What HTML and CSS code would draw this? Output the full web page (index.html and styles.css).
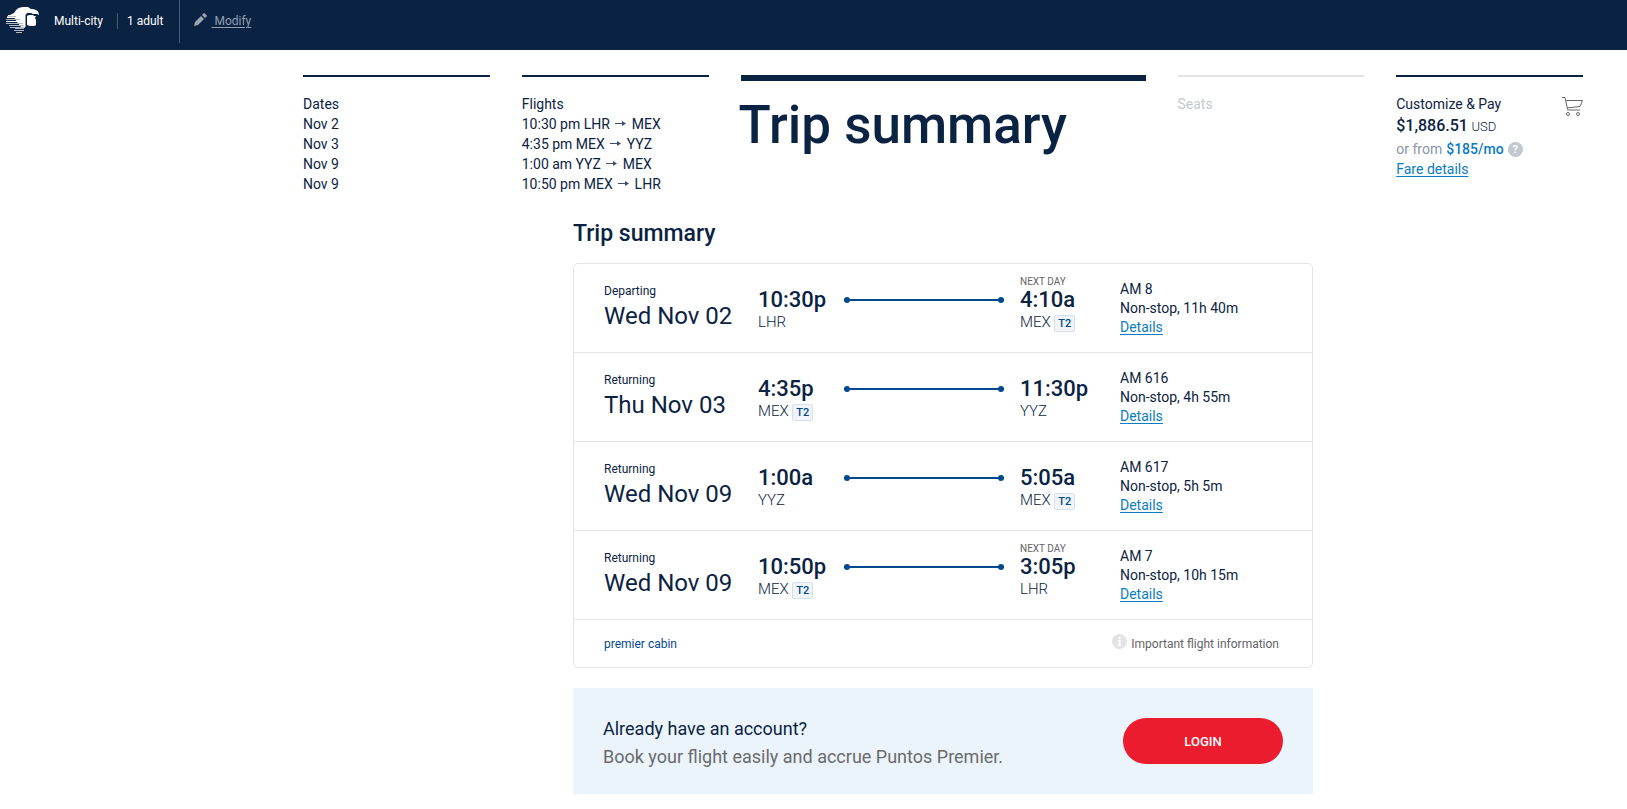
FILE: index.html
```
<!DOCTYPE html>
<html lang="en">
<head>
    <meta charset="UTF-8">
    <meta name="viewport" content="width=device-width, initial-scale=1.0">
    <title>Trip summary</title>
    <link rel="stylesheet" href="styles.css">
</head>
<body>
    <header class="topbar">
        <a class="logo" href="#" aria-label="Home">
            <svg width="34" height="28" viewBox="0 0 34 28">
                <path fill="#fff" d="M4 9 L8 7 C10 3 13 1 17 1 H22 L25 3 C30 3 33 5 33 9 L31 8 H27 L25 7 H21 L19.500 9 V21 H15 L11 16 L8 11 Z"/>
                <path fill="#fff" d="M21 10 L23 9 H27 L28 10 H30 L29 12 L30 14 V18 Q30 20 28 20 H24 L21 19 Z"/>
                <path fill="#fff" d="M2 9h10v1H2zM1 11h12v1H1zM0 15h15v1H0z"/>
                <path fill="#aeb8c8" d="M1 10h9v1H1zM0 13h14v1H0zM0 17h17v1H0zM3 19h15v1H3zM4 21h15v1H4zM9 22h9v1H9zM8 24h10v1H8zM10 26h6v1h-6z"/>
            </svg>
        </a>
        <span class="trip-type">Multi-city</span>
        <span class="passengers">1 adult</span>
        <a class="modify" href="#">
            <svg width="13" height="13" viewBox="0 0 13 13">
                <path fill="#9aa4b3" d="M0 13 L1 9 L7 3 L10 6 L4 12 Z M8 2 L10 0 Q11 0 13 3 L11 5 Z"/>
            </svg><span>&nbsp;Modify</span>
        </a>
    </header>

    <main class="container">
        <nav class="steps">
            <div class="step">
                <div>Dates</div>
                <div>Nov 2</div>
                <div>Nov 3</div>
                <div>Nov 9</div>
                <div>Nov 9</div>
            </div>
            <div class="step">
                <div>Flights</div>
                <div>10:30 pm LHR <svg class="arrow" viewBox="0 0 11 7"><path d="M0 3h7v1H0zM7 1l4 2.500L7 6z"/></svg> MEX</div>
                <div>4:35 pm MEX <svg class="arrow" viewBox="0 0 11 7"><path d="M0 3h7v1H0zM7 1l4 2.500L7 6z"/></svg> YYZ</div>
                <div>1:00 am YYZ <svg class="arrow" viewBox="0 0 11 7"><path d="M0 3h7v1H0zM7 1l4 2.500L7 6z"/></svg> MEX</div>
                <div>10:50 pm MEX <svg class="arrow" viewBox="0 0 11 7"><path d="M0 3h7v1H0zM7 1l4 2.500L7 6z"/></svg> LHR</div>
            </div>
            <div class="step current">
                <h1>Trip summary</h1>
            </div>
            <div class="step disabled">
                <div>Seats</div>
            </div>
            <div class="step pay">
                <div>
                    <div>Customize &amp; Pay</div>
                    <div class="price"><strong>$1,886.51</strong> <small>USD</small></div>
                    <div class="monthly">or from <strong>$185/mo</strong> <button class="help" aria-label="Help">?</button></div>
                    <a href="#">Fare details</a>
                </div>
                <svg class="cart" width="21" height="19" viewBox="0 0 21 19">
                    <path fill="none" stroke="#66676a" d="M0 .5H3L5.500 12M3.500 3.500H20.500L18 9.500L5 11"/>
                    <path fill="none" stroke="#b5b5b5" stroke-width="2" d="M5 13H18"/>
                    <circle cx="6" cy="17" r="1.500" fill="none" stroke="#66676a"/>
                    <circle cx="16" cy="17" r="1.500" fill="none" stroke="#66676a"/>
                </svg>
            </div>
        </nav>

        <section class="summary">
            <h2>Trip summary</h2>

            <div class="card">
                <div class="flight">
                    <div class="day">
                        <div class="label">Departing</div>
                        <div class="date">Wed Nov 02</div>
                    </div>
                    <div class="stop">
                        <div class="time">10:30p</div>
                        <div class="airport">LHR</div>
                    </div>
                    <div class="route"></div>
                    <div class="stop">
                        <div class="next-day">NEXT DAY</div>
                        <div class="time">4:10a</div>
                        <div class="airport">MEX <span class="terminal">T2</span></div>
                    </div>
                    <div class="info">
                        <div>AM 8</div>
                        <div>Non-stop, 11h 40m</div>
                        <a href="#">Details</a>
                    </div>
                </div>

                <div class="flight">
                    <div class="day">
                        <div class="label">Returning</div>
                        <div class="date">Thu Nov 03</div>
                    </div>
                    <div class="stop">
                        <div class="time">4:35p</div>
                        <div class="airport">MEX <span class="terminal">T2</span></div>
                    </div>
                    <div class="route"></div>
                    <div class="stop">
                        <div class="time">11:30p</div>
                        <div class="airport">YYZ</div>
                    </div>
                    <div class="info">
                        <div>AM 616</div>
                        <div>Non-stop, 4h 55m</div>
                        <a href="#">Details</a>
                    </div>
                </div>

                <div class="flight">
                    <div class="day">
                        <div class="label">Returning</div>
                        <div class="date">Wed Nov 09</div>
                    </div>
                    <div class="stop">
                        <div class="time">1:00a</div>
                        <div class="airport">YYZ</div>
                    </div>
                    <div class="route"></div>
                    <div class="stop">
                        <div class="time">5:05a</div>
                        <div class="airport">MEX <span class="terminal">T2</span></div>
                    </div>
                    <div class="info">
                        <div>AM 617</div>
                        <div>Non-stop, 5h 5m</div>
                        <a href="#">Details</a>
                    </div>
                </div>

                <div class="flight">
                    <div class="day">
                        <div class="label">Returning</div>
                        <div class="date">Wed Nov 09</div>
                    </div>
                    <div class="stop">
                        <div class="time">10:50p</div>
                        <div class="airport">MEX <span class="terminal">T2</span></div>
                    </div>
                    <div class="route"></div>
                    <div class="stop">
                        <div class="next-day">NEXT DAY</div>
                        <div class="time">3:05p</div>
                        <div class="airport">LHR</div>
                    </div>
                    <div class="info">
                        <div>AM 7</div>
                        <div>Non-stop, 10h 15m</div>
                        <a href="#">Details</a>
                    </div>
                </div>

                <div class="card-footer">
                    <span class="cabin">premier cabin</span>
                    <span class="important">
                        <svg width="15" height="15" viewBox="0 0 15 15">
                            <circle cx="7.500" cy="7.500" r="7.500" fill="#e3e3e3"/>
                            <path fill="#fff" d="M6.500 3h2v2h-2zM6 6h2.500v5H9v1H6v-1h.5V7H6z"/>
                        </svg>
                        Important flight information
                    </span>
                </div>
            </div>

            <div class="account">
                <div class="account-text">
                    <div>Already have an account?</div>
                    <div class="benefit">Book your flight easily and accrue Puntos Premier.</div>
                </div>
                <button class="login">LOGIN</button>
            </div>
        </section>
    </main>
</body>
</html>
```

FILE: styles.css
```
* {
    box-sizing: border-box;
}
body {
    margin: 0;
    font-family: Roboto, "Liberation Sans", sans-serif;
    font-size: 14px;
    line-height: 20px;
    color: #0b2343;
    background: #fff;
}
h1, h2 {
    margin: 0;
    font-weight: 500;
}
a {
    color: #0a7cc1;
    text-underline-offset: 2px;
}
strong {
    font-weight: 500;
}

/* top bar */
.topbar {
    display: flex;
    align-items: flex-start;
    height: 50px;
    padding-left: 6px;
    background: #0b2343;
    color: #fff;
    font-size: 12px;
}
.logo {
    margin: 6px 14px 0 0;
}
.logo svg {
    display: block;
}
.trip-type, .passengers {
    margin-top: 13px;
    line-height: 16px;
}
.trip-type {
    padding-right: 14px;
    border-right: 1px solid #4a5b74;
}
.passengers {
    padding: 0 16px 0 9px;
}
.modify {
    display: flex;
    height: 43px;
    padding: 13px 0 0 14px;
    border-left: 1px solid #4a5b74;
    color: #929daf;
    line-height: 16px;
}
.modify span {
    margin-left: 4px;
}

.container {
    padding: 25px 44px 0 303px;
}

/* booking steps */
.steps {
    display: grid;
    grid-template-columns: 1fr 1fr 405px 1fr 1fr;
    gap: 32px;
}
.step {
    padding-top: 17px;
    border-top: 2px solid #0b2343;
}
.step.current {
    border-top-width: 6px;
}
.step.current h1 {
    margin-left: -2px;
    font-size: 53px;
    line-height: 54px;
}
.step.disabled {
    border-color: #e3e4e5;
    color: #c4c9d1;
}
.arrow {
    width: 11px;
    height: 7px;
    margin: 0 2px 2px;
    fill: #3d4f69;
}
.pay {
    display: flex;
    align-items: flex-start;
    justify-content: space-between;
}
.cart {
    margin-top: 3px;
}
.price {
    line-height: 24px;
}
.price strong {
    font-size: 16px;
}
.price small {
    font-size: 13px;
    font-weight: 300;
}
.monthly {
    display: flex;
    align-items: center;
    gap: 4px;
    color: #8b96a6;
}
.monthly strong {
    color: #0a7cc1;
}
.help {
    width: 15px;
    height: 15px;
    padding: 0;
    border: none;
    border-radius: 50%;
    background: #c2c8d0;
    color: #fff;
    font: 700 11px/15px Roboto, sans-serif;
}

/* trip summary */
.summary {
    max-width: 740px;
    margin: 25px auto 0;
}
.summary h2 {
    font-size: 23px;
    line-height: 30px;
}
.card {
    margin-top: 14px;
    border: 1px solid #e3e4e5;
    border-radius: 5px;
}
.flight {
    display: grid;
    grid-template-columns: 154px 86px 176px 100px 1fr;
    align-items: end;
    height: 89px;
    padding: 0 0 15px 30px;
    border-bottom: 1px solid #e3e4e5;
}
.label {
    font-size: 12px;
    line-height: 16px;
}
.date {
    padding-bottom: 3px;
    font-size: 24px;
    line-height: 35px;
}
.stop {
    padding-bottom: 5px;
}
.time {
    font-size: 22px;
    font-weight: 500;
    line-height: 24px;
}
.next-day {
    font-size: 10px;
    line-height: 12px;
    color: #636466;
}
.airport {
    font-size: 15px;
    font-weight: 300;
}
.terminal {
    display: inline-block;
    padding: 0 3px;
    border: 1px solid #d5e0ec;
    border-radius: 2px;
    background: #f1f5f9;
    color: #00498f;
    font-size: 11px;
    font-weight: 500;
    line-height: 15px;
}

/* line between the two airports, with a dot at each end */
.route {
    display: flex;
    align-items: center;
    justify-content: space-between;
    height: 6px;
    margin: 0 16px 34px 0;
    background: linear-gradient(#00498f, #00498f) center / 100% 2px no-repeat;
}
.route::before, .route::after {
    content: "";
    width: 6px;
    height: 6px;
    border-radius: 50%;
    background: #00498f;
}
.info {
    line-height: 19px;
}
.card-footer {
    display: flex;
    align-items: center;
    justify-content: space-between;
    height: 47px;
    padding: 0 33px 0 30px;
    font-size: 12px;
}
.cabin {
    color: #00498f;
}
.important {
    display: flex;
    gap: 4px;
    color: #636466;
}

.account {
    display: flex;
    align-items: center;
    justify-content: space-between;
    height: 106px;
    margin-top: 20px;
    padding: 0 30px;
    background: #ebf4fb;
    font-size: 18px;
    line-height: 28px;
}
.account-text {
    padding-top: 4px;
}
.benefit {
    color: #6a6b6d;
}
.login {
    width: 160px;
    height: 46px;
    border: none;
    border-radius: 23px;
    background: #eb1c2e;
    color: #fff;
    font: 500 13px Roboto, sans-serif;
}
```
